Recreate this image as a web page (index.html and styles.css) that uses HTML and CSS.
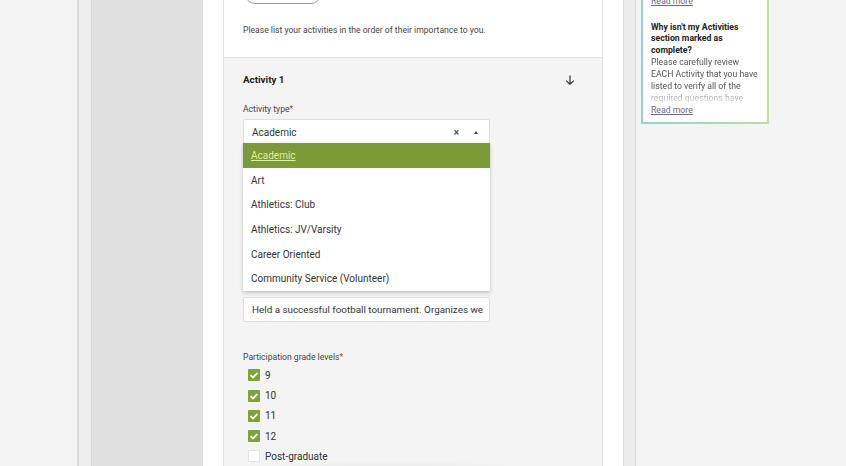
FILE: index.html
```html
<!DOCTYPE html>
<html lang="en">
<head>
<meta charset="utf-8">
<title>Activities</title>
<link rel="stylesheet" href="styles.css">
</head>
<body>
  <div class="bg-left"></div>
  <div class="rail-left"></div>
  <div class="panel"></div>
  <main class="main">
    <div class="card">
      <section class="intro">
        <div class="pill"></div>
        <p class="intro-text">Please list your activities in the order of their importance to you.</p>
      </section>
      <section class="activity">
        <div class="act-head">
          <h2 class="act-title">Activity 1</h2>
          <svg class="arrow" width="10" height="10" viewBox="0 0 10 10" aria-hidden="true">
            <path d="M5 0.5V9.2M1.2 5.6L5 9.3L8.8 5.6" fill="none" stroke="#333" stroke-width="1.2"/>
          </svg>
        </div>
        <label class="field-label">Activity type<span class="req">*</span></label>
        <div class="select">
          <span class="select-value">Academic</span>
          <span class="select-clear">&times;</span>
          <span class="select-caret"></span>
        </div>
        <ul class="menu">
          <li class="menu-item active"><span>Academic</span></li>
          <li class="menu-item">Art</li>
          <li class="menu-item">Athletics: Club</li>
          <li class="menu-item">Athletics: JV/Varsity</li>
          <li class="menu-item">Career Oriented</li>
          <li class="menu-item">Community Service (Volunteer)</li>
        </ul>
        <div class="input">Held a successful football tournament. Organizes we</div>
        <label class="field-label grades-label">Participation grade levels<span class="req">*</span></label>
        <ul class="checks">
          <li class="check"><span class="box on"></span>9</li>
          <li class="check"><span class="box on"></span>10</li>
          <li class="check"><span class="box on"></span>11</li>
          <li class="check"><span class="box on"></span>12</li>
          <li class="check"><span class="box"></span>Post-graduate</li>
        </ul>
      </section>
    </div>
  </main>
  <div class="rail-right"></div>
  <aside class="aside">
    <div class="tip">
      <a class="tip-link first">Read more</a>
      <h3 class="tip-title">Why isn't my Activities section marked as complete?</h3>
      <p class="tip-body">Please carefully review EACH Activity that you have listed to verify all of the required questions have</p>
      <a class="tip-link">Read more</a>
    </div>
  </aside>
  <div class="bottom-shade"></div>
</body>
</html>
```

FILE: styles.css
```css
* { box-sizing: border-box; }
html, body { margin: 0; padding: 0; }
body {
  display: flex;
  height: 466px;
  overflow: hidden;
  font-family: Roboto, "Liberation Sans", sans-serif;
  color: #333;
  background: #f4f4f4;
}
.bg-left { flex: 0 0 77px; background: #f4f4f4; }
.rail-left {
  flex: 0 0 15px;
  background: #ededed;
  border-left: 2px solid #d9d9d9;
  border-right: 1px solid #d9d9d9;
}
.panel { flex: 0 0 111px; background: #e0e0e0; }
.main {
  flex: 0 0 420px;
  background: #fff;
  padding: 0 20px;
}
.card {
  height: 100%;
  display: flex;
  flex-direction: column;
  border-left: 1px solid #e3e3e3;
  border-right: 1px solid #e3e3e3;
}
.intro {
  padding: 0 19px 21px;
  border-bottom: 1px solid #e3e3e3;
}
.pill {
  width: 76px;
  height: 20px;
  margin: -16px 0 0 2px;
  border: 1.5px solid #9c9c9c;
  border-radius: 10px;
}
.intro-text {
  margin: 20px 0 0;
  font-size: 8.6px;
  line-height: 12px;
  color: #444;
}
.activity {
  flex: 1;
  background: #f4f4f4;
  padding: 14px 19px 0;
}
.act-head {
  display: flex;
  justify-content: space-between;
  align-items: center;
  height: 14px;
}
.act-title {
  margin: 0;
  font-size: 9.8px;
  font-weight: 700;
  color: #222;
}
.arrow { margin-right: 8px; margin-top: 2px; }
.field-label {
  display: block;
  margin-top: 17px;
  font-size: 8.6px;
  line-height: 12px;
  color: #444;
}
.req { color: #c0392b; }
.select {
  display: flex;
  align-items: center;
  width: 247px;
  height: 24px;
  margin-top: 4px;
  padding: 1px 11px 0 8px;
  background: #fff;
  border: 1px solid #dedede;
  border-bottom: none;
  border-radius: 2px 2px 0 0;
}
.select-value { flex: 1; font-size: 10px; color: #333; }
.select-clear {
  font-size: 10px;
  font-weight: 700;
  color: #555;
  margin-right: 15px;
}
.select-caret {
  width: 0; height: 0;
  border-left: 2.5px solid transparent;
  border-right: 2.5px solid transparent;
  border-bottom: 3px solid #444;
}
.menu {
  list-style: none;
  margin: 0;
  padding: 0;
  width: 247px;
  background: #fff;
  box-shadow: 0 2px 4px rgba(0,0,0,0.18), 0 0 1px rgba(0,0,0,0.15);
}
.menu-item {
  height: 24.7px;
  line-height: 24.7px;
  padding: 1px 0 0 8px;
  font-size: 10px;
  color: #333;
}
.menu-item.active {
  background: #7c9a38;
}
.menu-item.active span {
  color: #dcef9e;
  text-decoration: underline;
}
.input {
  width: 247px;
  height: 25px;
  margin-top: 6px;
  padding: 0 8px;
  line-height: 23px;
  font-size: 9.85px;
  color: #333;
  background: #fff;
  border: 1px solid #dedede;
  border-radius: 2px;
  white-space: nowrap;
  overflow: hidden;
}
.grades-label { margin-top: 29px; }
.checks {
  list-style: none;
  margin: 2px 0 0;
  padding: 0 0 0 5px;
}
.check {
  display: flex;
  align-items: center;
  height: 20.3px;
  font-size: 10px;
  color: #333;
}
.box {
  width: 12px;
  height: 12px;
  margin-right: 5px;
  border-radius: 1px;
  background: #fff;
  border: 1px solid #e2e2e2;
}
.box.on {
  border: none;
  background: #80a03c url("data:image/svg+xml,%3Csvg xmlns='http://www.w3.org/2000/svg' width='12' height='12' viewBox='0 0 12 12'%3E%3Cpath d='M2.5 6.1L5 8.5L9.5 3.8' fill='none' stroke='%23fff' stroke-width='1.8'/%3E%3C/svg%3E") center/12px 12px no-repeat;
}
.rail-right {
  flex: 0 0 13px;
  background: #ececec;
  border-left: 1px solid #dcdcdc;
  border-right: 1px solid #d9d9d9;
}
.aside {
  flex: 1;
  background: #f4f4f4;
  padding-left: 5px;
}
.tip {
  width: 128px;
  margin-top: -8px;
  padding: 1px 8px 6px;
  background: #fff;
  border: 2px solid;
  border-image: linear-gradient(90deg, #93d3cf, #bedca4) 1;
  font-size: 8.7px;
}
.tip-link {
  display: block;
  line-height: 12px;
  color: #6a6a7a;
  text-decoration: underline;
}
.tip-link.first { margin-bottom: 15px; }
.tip-title {
  margin: 0;
  font-size: 8.7px;
  line-height: 11.4px;
  font-weight: 700;
  color: #222;
}
.tip-body {
  margin: 1px 0 0;
  line-height: 11.8px;
  color: #555;
  -webkit-mask-image: linear-gradient(to bottom, #000 66%, rgba(0,0,0,0.06) 100%);
  mask-image: linear-gradient(to bottom, #000 66%, rgba(0,0,0,0.06) 100%);
}
.bottom-shade {
  position: fixed;
  left: 200px;
  top: 440px;
  width: 380px;
  height: 40px;
  pointer-events: none;
  background: radial-gradient(ellipse 50% 50% at 50% 100%, rgba(0,0,0,0.09), rgba(0,0,0,0) 100%);
}
```
